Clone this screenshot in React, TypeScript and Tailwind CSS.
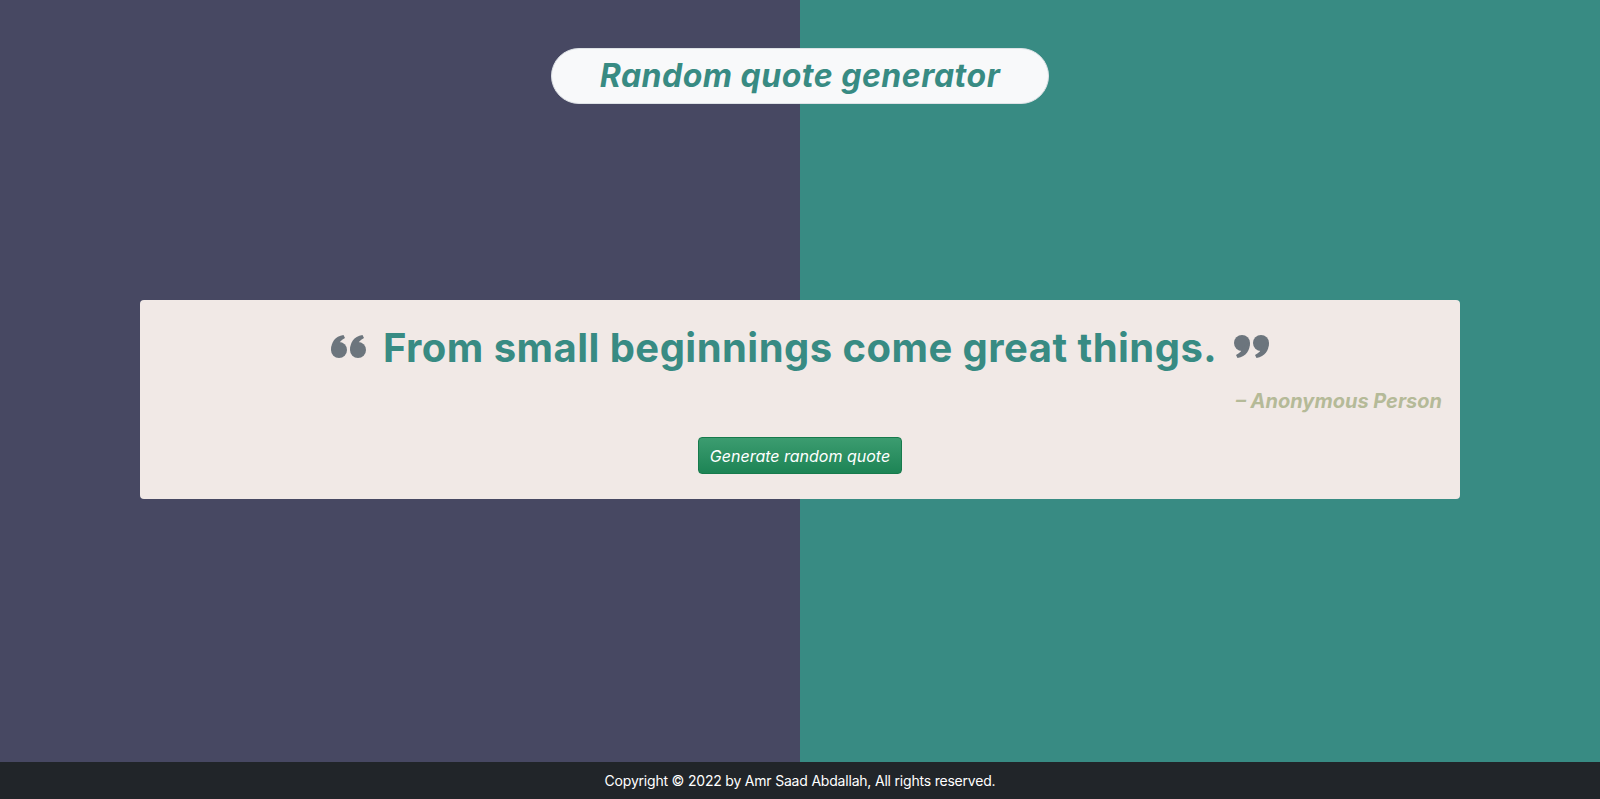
import React from "react";

function QuoteMarks({ flip = false }: { flip?: boolean }) {
  return (
    <svg
      viewBox="0 0 35 23"
      className={"h-[23px] w-[35px] shrink-0 fill-[#6c757d] " + (flip ? "rotate-180" : "")}
    >
      <circle cx="8" cy="15" r="8" />
      <path d="M0.2 15.5 C-0.2 8 3.5 1.5 12.5 0 L14 3 C9.8 5 7.5 8 7.5 11 Z" />
      <circle cx="27" cy="15" r="8" />
      <path d="M19.2 15.5 C18.8 8 22.5 1.5 31.5 0 L33 3 C28.8 5 26.5 8 26.5 11 Z" />
    </svg>
  );
}

export default function App() {
  return (
    <div className="flex min-h-screen flex-col bg-[linear-gradient(to_right,#474862_50%,#388b83_50%)] font-['Inter','Roboto',sans-serif]">
      <main className="flex flex-1 flex-col items-center pt-[48px]">
        <div className="flex h-[56px] w-[498px] items-center justify-center rounded-full border border-[#dee2e6] bg-[#f8f9fa]">
          <h1 className="text-[32px] font-bold italic leading-[1.2] tracking-[0.5px] text-[#388b83]">Random quote generator</h1>
        </div>

        <div className="mt-[196px] flex w-[1320px] flex-col items-center rounded-[4px] bg-[#f1e9e6] px-[18px] pb-[25px] pt-[24px]">
          <div className="flex items-start gap-[17px]">
            <div className="mt-[11px]">
              <QuoteMarks />
            </div>
            <p className="text-[40px] font-bold leading-[48px] tracking-[0.45px] text-[#388b83]">From small beginnings come great things.</p>
            <div className="mt-[11px]">
              <QuoteMarks flip />
            </div>
          </div>
          <p className="mt-[14px] w-full text-right text-[20px] font-bold italic leading-[30px] text-[#b5ba98]">– Anonymous Person</p>
          <button className="mt-[21px] h-[37px] w-[204px] rounded-[4px] border border-[#177a4c] bg-[linear-gradient(to_bottom,#3c9c70,#1d8455)] text-[16px] italic text-white">
            Generate random quote
          </button>
        </div>
      </main>
      <footer className="flex h-[37px] items-center justify-center bg-[#212529] text-[14px] tracking-[-0.2px] text-white">
        Copyright © 2022 by Amr Saad Abdallah, All rights reserved.
      </footer>
    </div>
  );
}
